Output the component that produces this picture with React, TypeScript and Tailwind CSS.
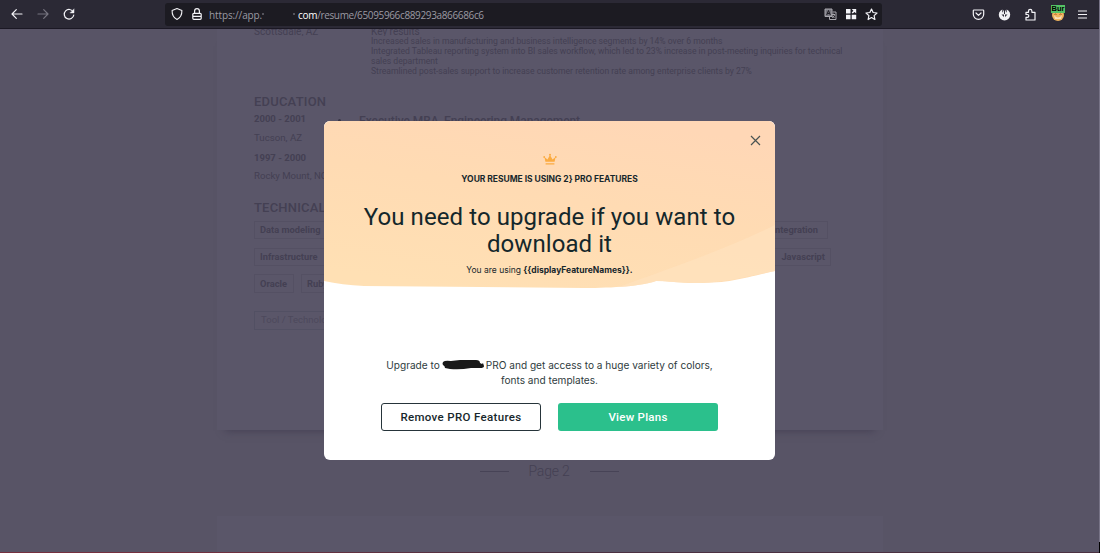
import type { ReactNode } from "react";

function BrowserBar() {
  return (
    <header className="flex h-[29px] shrink-0 items-center border-b border-[#1b1824] bg-[#2b2935] text-[#f4f4f8]">
      <div className="flex w-[165px] items-center pl-[10px]">
        <svg width="14" height="14" viewBox="0 0 14 14" fill="none" stroke="currentColor" strokeWidth="1.2" strokeLinecap="round" strokeLinejoin="round">
          <path d="M12 7H2.2M6.3 2.7 2 7l4.3 4.3" />
        </svg>
        <svg className="ml-[12px] text-[#777580]" width="14" height="14" viewBox="0 0 14 14" fill="none" stroke="currentColor" strokeWidth="1.2" strokeLinecap="round" strokeLinejoin="round">
          <path d="M2 7h9.8M7.7 2.7 12 7l-4.3 4.3" />
        </svg>
        <svg className="ml-[12px]" width="14" height="14" viewBox="0 0 14 14" fill="none" stroke="currentColor" strokeWidth="1.2" strokeLinecap="round">
          <path d="M11.3 5A4.8 4.8 0 1 0 11.8 8" />
          <path d="M12 2.2v3.7H8.3z" fill="currentColor" strokeWidth=".5" strokeLinejoin="round" />
        </svg>
      </div>
      <div className="flex h-[23px] w-[717px] items-center rounded-[3px] bg-[#1c1b22]">
        <svg className="ml-[5px]" width="14" height="14" viewBox="0 0 14 14" fill="none" stroke="currentColor" strokeWidth="1.1" strokeLinejoin="round">
          <path d="M7 1.6 11.9 3.4c.1 4-1.2 7.2-4.9 9C3.3 10.6 2 7.4 2.1 3.4z" />
        </svg>
        <svg className="ml-[6px]" width="14" height="14" viewBox="0 0 14 14" fill="none" stroke="currentColor" strokeWidth="1.2" strokeLinejoin="round">
          <rect x="2.8" y="6.3" width="8.4" height="6" rx="1" />
          <path d="M4.6 6V4a2.4 2.4 0 0 1 4.8 0v2M3 9.3h8" />
        </svg>
        <div className="ml-[5px] flex w-[605px] items-center whitespace-nowrap pt-px font-['Open_Sans',sans-serif] text-[10px] leading-[14px] text-[#9b9aa2]">
          <span className="w-[53px] tracking-[-0.12px]">https://app.</span>
          <span className="w-[36px] text-[8px]">
            <span className="inline-block size-[2px] -translate-y-[3px] bg-[#55545c]" />
            <span className="ml-[29px] inline-block size-[2px] -translate-y-[3px] bg-[#55545c]" />
          </span>
          <span className="tracking-[-0.3px] text-white">com</span>
          <span className="tracking-[-0.36px]">/resume/65095966c889293a866686c6</span>
        </div>
        <svg className="ml-[10px]" width="13" height="13" viewBox="0 0 13 13" fill="none" stroke="#aaa9af" strokeWidth="1">
          <path d="M1 1h7v7.5H1z" fill="#77767e" />
          <path d="m2.7 7 1.8-4.5L6.3 7M3.3 5.5h2.4" stroke="#1c1b22" />
          <path d="M8.5 4H12v7.5H5.5V9M7.5 6.5h3.5M9.2 5.5v1M10.5 6.5c0 1.5-1 2.5-2.5 3M8 7.5c.5 1 1.3 1.5 2.5 2" />
        </svg>
        <svg className="ml-[8px]" width="12" height="12" viewBox="0 0 12 12" fill="currentColor">
          <path d="M1 1h4.5v4.5H1zM1 6.7h4.5v4.5H1zM6.7 6.7h4.5v4.5H6.7zM6.7 1h4.5v4.5L9.6 3.9 7.7 5.5 6.7 4.5l1.7-1.7z" />
        </svg>
        <svg className="ml-[8px]" width="13" height="13" viewBox="0 0 13 13" fill="none" stroke="currentColor" strokeWidth="1.2" strokeLinejoin="round">
          <path d="m6.5 1 1.6 3.5 3.9.5-2.9 2.6.8 3.9-3.4-2-3.4 2 .8-3.9L1 5l3.9-.5z" />
        </svg>
      </div>
      <div className="flex flex-1 items-center">
        <svg className="ml-[90px]" width="13" height="13" viewBox="0 0 13 13" fill="none" stroke="currentColor" strokeWidth="1.2" strokeLinecap="round" strokeLinejoin="round">
          <path d="M2 2h9q.7 0 .7.7V6.3a5.2 5 0 0 1-10.4 0V2.7Q1.3 2 2 2zM4 5l2.5 2.4L9 5" />
        </svg>
        <svg className="ml-[13px]" width="13" height="13" viewBox="0 0 13 13">
          <circle cx="6.5" cy="6.7" r="5.7" fill="#f0f0f3" />
          <path d="M4.3 0h4.4v4.3H7.9V2.5H7V6H6V2.500H5.100V4.300H4.300zM3.500 6.500H6V9zM9.500 6.500H7V9z" fill="#2b2935" />
        </svg>
        <svg className="ml-[13px]" width="13" height="13" viewBox="0 0 13 13" fill="none" stroke="currentColor" strokeWidth="1.2" strokeLinejoin="round">
          <path d="M2 4.3h2.5V3a1.7 1.7 0 0 1 3.4 0v1.3H11V12H2V9.3h1.4a1.4 1.4 0 0 0 0-2.8H2z" />
        </svg>
        <div className="relative ml-[14px] h-[20px] w-[14px]">
          <svg className="absolute left-0 top-[4px]" width="14" height="14" viewBox="0 0 14 14">
            <circle cx="7" cy="7" r="6" fill="#efb45d" />
            <path d="M3 7q4 5 8 0l-1 4H4z" fill="#f7dfba" />
            <path d="M3.5 6.5q1-1 2 0M8.5 6.5q1-1 2 0" stroke="#a84e23" fill="none" />
          </svg>
          <span className="absolute left-0 top-px h-[8px] w-[14px] bg-[#55c266] text-center font-['Liberation_Sans',sans-serif] text-[7.5px] font-bold leading-[8px] text-black">Bur</span>
        </div>
        <svg className="ml-[12px]" width="11" height="11" viewBox="0 0 11 11" stroke="currentColor" strokeWidth="1.1">
          <path d="M1 2h9M1 5.5h9M1 9h9" />
        </svg>
      </div>
    </header>
  );
}

function Tag({ children, className }: { children: ReactNode; className: string }) {
  return (
    <div className={`flex h-full items-center whitespace-nowrap border border-[#545063] text-[9.3px] font-bold ${className}`}>
      {children}
    </div>
  );
}

function ResumePage() {
  return (
    <main className="mx-auto h-[401px] w-[666px] shrink-0 bg-[#5a5669] pl-[37px] font-[Roboto,sans-serif] text-[#444053] shadow-[0_9px_8px_-8px_#454154]">
      <div className="flex h-[7px] items-start overflow-hidden text-[10px] leading-[5px]">
        <span className="w-[117px]">Scottsdale, AZ</span>
        <span>Key results</span>
      </div>
      <ul className="ml-[117px] whitespace-nowrap text-[8.6px] leading-[10px]">
        <li>Increased sales in manufacturing and business intelligence segments by 14% over 6 months</li>
        <li>Integrated Tableau reporting system into BI sales workflow, which led to 23% increase in post-meeting inquiries for technical</li>
        <li>sales department</li>
        <li>Streamlined post-sales support to increase customer retention rate among enterprise clients by 27%</li>
      </ul>
      <h2 className="mt-[18px] text-[13px] font-medium leading-[16px] tracking-[0.2px]">EDUCATION</h2>
      <div className="mt-[2px] flex h-[16px] items-center whitespace-nowrap text-[9.5px] font-bold">
        <span className="w-[84px] -translate-y-px">2000 - 2001</span>
        <span className="mr-[18px] size-[3px] rounded-full bg-[#383446]" />
        <span className="translate-y-px text-[12px] font-medium tracking-[-0.07px]">Executive MBA, Engineering Management</span>
      </div>
      <p className="mt-[2px] text-[9.7px] leading-[16px]">Tucson, AZ</p>
      <p className="mt-[4px] text-[9.5px] font-bold leading-[16px]">1997 - 2000</p>
      <p className="mt-[2px] text-[9.6px] leading-[16px]">Rocky Mount, NC</p>
      <h2 className="mt-[16px] text-[13px] font-medium leading-[16px] tracking-[0.2px]">TECHNICAL</h2>
      <div className="mt-[5px] flex h-[18px] justify-between pr-[55px]">
        <Tag className="w-[110px] pl-[5px]">Data modeling</Tag>
        <Tag className="w-[70px] justify-end pr-[9px]">Integration</Tag>
      </div>
      <div className="mt-[9px] flex h-[18px] justify-between pr-[52px]">
        <Tag className="w-[100px] pl-[5px]">Infrastructure</Tag>
        <Tag className="w-[60px] justify-end pr-[5px]">Javascript</Tag>
      </div>
      <div className="mt-[8px] flex h-[19px] gap-[7px]">
        <Tag className="w-[40px] pl-[5px]">Oracle</Tag>
        <Tag className="w-[50px] pl-[5px]">Ruby</Tag>
      </div>
      <div className="mt-[18px] flex h-[19px] w-[120px] items-center border border-[#525063] pl-[6px] text-[9.5px] text-[#4d495c]">Tool / Technology</div>
    </main>
  );
}

function ModalArt() {
  return (
    <svg className="absolute inset-0" width="451" height="180" viewBox="0 0 451 180">
      <defs>
        <linearGradient id="warm" x1="0.25" y1="1" x2="0.7" y2="0">
          <stop offset="0" stopColor="#ffe0b4" />
          <stop offset="0.55" stopColor="#ffdbb3" />
          <stop offset="1" stopColor="#ffd7b6" />
        </linearGradient>
      </defs>
      <path d="M0 0H451V150C420 157 405 163 365 162C350 161 340 160 332 160C318 165 290 167 260 167L40 165Q18 164 0 160Z" fill="url(#warm)" />
      <path d="M451 104C405 127 355 144 295 166Q320 164 332 160C350 161 360 162 375 162C405 161 420 156 451 150Z" fill="#ffe1bd" opacity=".75" />
      <path d="M0 6V0H6Q1 1 0 6M451 6V0H445Q450 1 451 6" fill="white" opacity=".5" />
    </svg>
  );
}

function UpgradeModal() {
  return (
    <section role="dialog" className="absolute left-[324px] top-[121px] h-[339px] w-[451px] overflow-hidden rounded-[6px] bg-white font-[Inter,sans-serif] text-[#17272c]">
      <ModalArt />
      <div className="relative flex h-full flex-col items-center whitespace-nowrap">
        <button aria-label="Close" className="absolute right-[14px] top-[14px] text-[#4a5452]">
          <svg width="11" height="11" viewBox="0 0 11 11" stroke="currentColor" strokeWidth="1.2">
            <path d="m1 1 9 9M10 1 1 10" />
          </svg>
        </button>
        <svg className="mt-[32px]" width="14" height="13" viewBox="0 0 14 13" fill="#fbab40">
          <path d="m2.4 8.8-1-4.8L4.500 6.500 7 2l2.500 4.500L12.600 4l-1 4.800zM2.600 10.200h8.800v1.400H2.600z" />
          <circle cx="1.2" cy="4" r=".9" />
          <circle cx="7" cy="1.8" r="1" />
          <circle cx="12.8" cy="4" r=".9" />
        </svg>
        <p className="mt-[6px] text-[8.5px] font-bold leading-[14px] tracking-[-0.04px]">{"YOUR RESUME IS USING 2} PRO FEATURES"}</p>
        <h1 className="mt-[18px] text-center font-[Roboto,sans-serif] text-[24px] font-normal leading-[27px] tracking-[0.08px] text-[#14272b]">
          You need to upgrade if you want to<br />download it
        </h1>
        <p className="mt-[5px] text-[8.5px] leading-[14px]">You are using <b className="font-bold">{"{{displayFeatureNames}}"}.</b></p>
        <div className="mt-[81px] text-[10.1px] leading-[14.5px] text-[#2f3c40]">
          <p className="flex items-center">
            Upgrade to
            <svg className="mx-[2px]" width="42" height="12" viewBox="0 0 42 12" fill="#191919">
              <path d="M1 3Q3 1 9 2L18 1 34 1Q38 1 38 4L40 5 41 4 42 7Q42 9 38 9L29 9Q18 11 8 10L3 9Q3 7 1 6Q0 5 1 3Z" />
            </svg>
            PRO and get access to a huge variety of colors,
          </p>
          <p className="text-center">fonts and templates.</p>
        </div>
        <div className="mt-[16px] flex gap-[17px] font-[Roboto,sans-serif] text-[11.5px] font-medium">
          <button className="h-[28px] w-[160px] rounded-[3px] border border-[#26343a] bg-white pt-px tracking-[0.34px]">Remove PRO Features</button>
          <button className="h-[28px] w-[160px] rounded-[3px] bg-[#2bc08c] pt-px tracking-[0.25px] text-white">View Plans</button>
        </div>
      </div>
    </section>
  );
}

export default function App() {
  return (
    <div className="relative flex h-[553px] w-[1100px] flex-col overflow-hidden bg-[#585466]">
      <BrowserBar />
      <ResumePage />
      <div className="mt-[32px] flex h-[18px] items-center justify-center gap-[20px] pr-[2px] font-[Roboto,sans-serif] text-[14px] font-light text-[#444053]">
        <span className="h-px w-[29px] bg-[#474356]" />
        <span className="w-[41px] whitespace-nowrap text-center tracking-[-0.2px]">Page 2</span>
        <span className="h-px w-[29px] bg-[#474356]" />
      </div>
      <div className="mx-auto mt-[36px] h-[36px] w-[666px] shrink-0 bg-[#5a5669]" />
      <div className="h-px shrink-0 bg-linear-to-r from-[#752f3e] from-15% to-[#4b3041] to-50%" />
      <div className="absolute right-0 top-0 h-[542px] w-px bg-[#777386]" />
      <div className="absolute bottom-0 right-0 h-[11px] w-px bg-black" />
      <UpgradeModal />
    </div>
  );
}
